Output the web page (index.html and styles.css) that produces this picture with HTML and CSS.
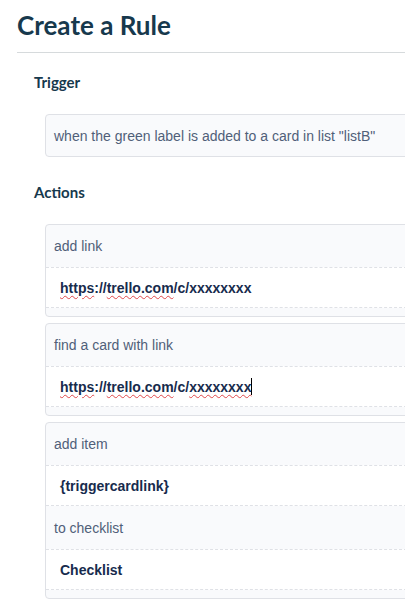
FILE: index.html
```html
<!DOCTYPE html>
<html>
<head>
<meta charset="utf-8">
<link rel="stylesheet" href="styles.css">
</head>
<body>
<div class="page">
  <h1 class="title">Create a Rule</h1>
  <div class="divider"></div>
  <section class="section">
    <h2 class="section-title">Trigger</h2>
    <div class="trigger-box">when the green label is added to a card in list "listB"</div>
  </section>
  <section class="section">
    <h2 class="section-title actions-title">Actions</h2>
    <div class="card">
      <div class="label">add link</div>
      <div class="value"><span class="sp">https</span>://<span class="sp">trello.com</span>/c/xxxxxxxx</div>
    </div>
    <div class="card">
      <div class="label">find a card with link</div>
      <div class="value"><span class="sp">https</span>://<span class="sp">trello.com</span>/c/<span class="sp">xxxxxxxx</span><span class="caret"></span></div>
    </div>
    <div class="card">
      <div class="label">add item</div>
      <div class="value">{triggercardlink}</div>
      <div class="label label-2">to checklist</div>
      <div class="value">Checklist</div>
    </div>
  </section>
</div>
</body>
</html>
```

FILE: styles.css
```css
html, body {
  margin: 0;
  padding: 0;
  background: #ffffff;
}
.page {
  width: 405px;
  box-sizing: border-box;
  overflow: hidden;
  padding-left: 17px;
  padding-top: 9px;
}
.title {
  margin: 0;
  font-family: Lato, "Liberation Sans", sans-serif;
  font-weight: 700;
  font-size: 26px;
  line-height: 32px;
  color: #17394d;
}
.divider {
  margin-top: 11px;
  height: 1px;
  background: #d6dadc;
}
.section {
  padding-left: 17px;
}
.section-title {
  margin: 0;
  padding-top: 19px;
  font-family: Lato, "Liberation Sans", sans-serif;
  font-weight: 700;
  font-size: 15px;
  line-height: 20px;
  color: #17394d;
}
.actions-title {
  padding-top: 25px;
}
.trigger-box {
  margin-top: 22px;
  margin-left: 11px;
  margin-right: -8px;
  height: 41px;
  display: flex;
  align-items: center;
  padding-left: 8px;
  border: 1px solid #dfe1e6;
  border-radius: 4px;
  background: #f9fafc;
  font-family: "Liberation Sans", Arial, sans-serif;
  font-size: 14px;
  color: #505f79;
}
.actions-title + .card {
  margin-top: 22px;
}
.card {
  margin-left: 11px;
  margin-right: -8px;
  margin-bottom: 6px;
  border: 1px solid #dfe1e6;
  border-radius: 4px;
  background: #f9fafc;
  padding-bottom: 8px;
}
.label {
  height: 42px;
  display: flex;
  align-items: center;
  padding-left: 8px;
  font-family: "Liberation Sans", Arial, sans-serif;
  font-size: 14px;
  color: #505f79;
}
.label-2 {
  height: 43px;
}
.value {
  height: 39px;
  display: flex;
  align-items: center;
  padding-left: 14px;
  background: #ffffff;
  border-top: 1px dashed #dfe1e6;
  border-bottom: 1px dashed #dfe1e6;
  font-family: "Liberation Sans", Arial, sans-serif;
  font-weight: 700;
  font-size: 14px;
  color: #172b4d;
}
.sp {
  text-decoration: underline wavy #e0484a;
  text-decoration-thickness: 1px;
  text-underline-offset: 2px;
}
.caret {
  display: inline-block;
  width: 1px;
  height: 17px;
  background: #000000;
}
```
